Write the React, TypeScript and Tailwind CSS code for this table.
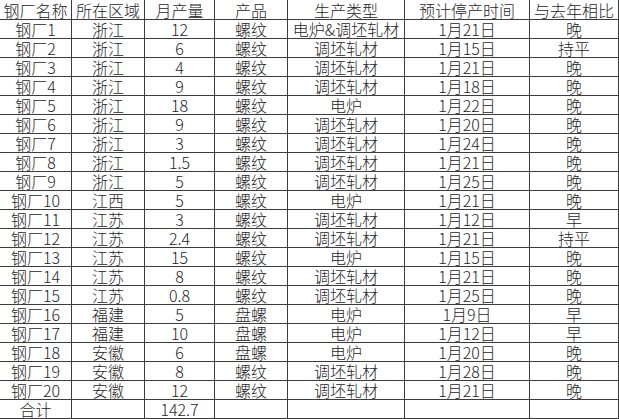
const headers = ["钢厂名称", "所在区域", "月产量", "产品", "生产类型", "预计停产时间", "与去年相比"];

const rows: string[][] = [
  ["钢厂1", "浙江", "12", "螺纹", "电炉&调坯轧材", "1月21日", "晚"],
  ["钢厂2", "浙江", "6", "螺纹", "调坯轧材", "1月15日", "持平"],
  ["钢厂3", "浙江", "4", "螺纹", "调坯轧材", "1月21日", "晚"],
  ["钢厂4", "浙江", "9", "螺纹", "调坯轧材", "1月18日", "晚"],
  ["钢厂5", "浙江", "18", "螺纹", "电炉", "1月22日", "晚"],
  ["钢厂6", "浙江", "9", "螺纹", "调坯轧材", "1月20日", "晚"],
  ["钢厂7", "浙江", "3", "螺纹", "调坯轧材", "1月24日", "晚"],
  ["钢厂8", "浙江", "1.5", "螺纹", "调坯轧材", "1月21日", "晚"],
  ["钢厂9", "浙江", "5", "螺纹", "调坯轧材", "1月25日", "晚"],
  ["钢厂10", "江西", "5", "螺纹", "电炉", "1月21日", "晚"],
  ["钢厂11", "江苏", "3", "螺纹", "调坯轧材", "1月12日", "早"],
  ["钢厂12", "江苏", "2.4", "螺纹", "调坯轧材", "1月21日", "持平"],
  ["钢厂13", "江苏", "15", "螺纹", "电炉", "1月15日", "晚"],
  ["钢厂14", "江苏", "8", "螺纹", "调坯轧材", "1月21日", "晚"],
  ["钢厂15", "江苏", "0.8", "螺纹", "调坯轧材", "1月25日", "晚"],
  ["钢厂16", "福建", "5", "盘螺", "电炉", "1月9日", "早"],
  ["钢厂17", "福建", "10", "盘螺", "电炉", "1月12日", "早"],
  ["钢厂18", "安徽", "6", "盘螺", "电炉", "1月20日", "晚"],
  ["钢厂19", "安徽", "8", "螺纹", "调坯轧材", "1月28日", "晚"],
  ["钢厂20", "安徽", "12", "螺纹", "调坯轧材", "1月21日", "晚"],
  ["合计", "", "142.7", "", "", "", ""],
];

const cell =
  "flex items-center justify-center border-r border-b border-[#3c3c3c] whitespace-nowrap";

export default function App() {
  return (
    <div
      className="w-[619px] h-[419px] bg-white text-[#262626] text-[16px] font-light leading-[18px] overflow-hidden"
      style={{ fontFamily: '"Noto Sans CJK SC", "Noto Sans", sans-serif' }}
    >
      <div className="grid grid-cols-[72px_73px_70px_73px_117px_125px_89px]">
        {headers.map((h) => (
          <div key={h} className={`${cell} h-[20px]`}>
            {h}
          </div>
        ))}
        {rows.map((r, i) =>
          r.map((v, j) => (
            <div key={`${i}-${j}`} className={`${cell} h-[19px]`}>
              {v}
            </div>
          ))
        )}
      </div>
    </div>
  );
}
